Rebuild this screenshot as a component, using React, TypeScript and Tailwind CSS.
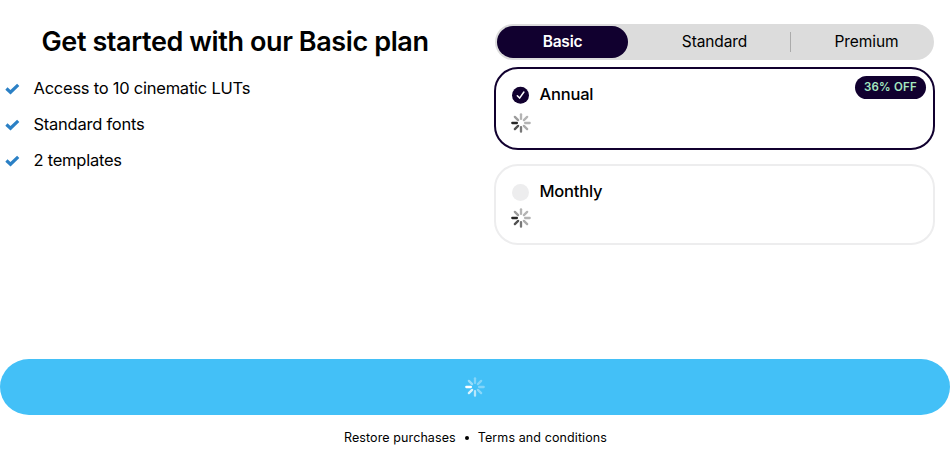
import React from "react";

const SPOKES = [0.34, 0.34, 0.34, 0.38, 0.62, 0.8, 1, 0.45];

function Spinner({ light = false }: { light?: boolean }) {
  const stroke = light ? "#ffffff" : "#262626";
  return (
    <svg width="20" height="20" viewBox="0 0 20 20" className="block shrink-0">
      {SPOKES.map((o, i) => (
        <line
          key={i}
          x1="10"
          y1="1.3"
          x2="10"
          y2="5.9"
          stroke={stroke}
          strokeWidth="2.3"
          strokeLinecap="round"
          opacity={o}
          transform={`rotate(${i * 45} 10 10)`}
        />
      ))}
    </svg>
  );
}

function Feature({ children }: { children: React.ReactNode }) {
  return (
    <li className="flex h-9 items-center">
      <svg width="16" height="14" viewBox="0 0 16 14" className="ml-[5px] mt-[1px] block">
        <path d="M1.4 6.5 L5.5 10.2 L13.2 2.9" fill="none" stroke="#2b80c5" strokeWidth="3.2" />
      </svg>
      <span className="ml-[12.5px] text-[16.5px] leading-none tracking-[-0.24px]">{children}</span>
    </li>
  );
}

export default function App() {
  return (
    <div className="flex h-[460px] w-[950px] flex-col overflow-hidden bg-white font-[Inter,sans-serif] text-black">
      <div className="flex h-[359px]">
        <section className="w-[494px]">
          <h1 className="ml-[41.5px] mt-[25px] whitespace-nowrap text-[27px] font-semibold leading-[34px] tracking-[-0.4px]">
            Get started with our Basic plan
          </h1>
          <ul className="mt-[11px]">
            <Feature>Access to 10 cinematic LUTs</Feature>
            <Feature>Standard fonts</Feature>
            <Feature>2 templates</Feature>
          </ul>
        </section>
        <section className="w-[441px] pt-[24px]">
          <div className="ml-px flex h-9 w-[439px] items-center rounded-full bg-[#dcdcdc] p-[2px] text-[15.5px] leading-none">
            <div className="flex h-8 w-[131px] items-center justify-center rounded-full bg-[#11002f] font-semibold text-white">
              <span className="tracking-[-0.2px]">Basic</span>
            </div>
            <div className="flex flex-1 items-center justify-center pl-[11px]">
              <span className="tracking-[-0.1px]">Standard</span>
            </div>
            <div className="h-5 w-px bg-[#ababab]" />
            <div className="flex w-[141px] items-center justify-center pl-[10px]">
              <span className="tracking-[-0.1px]">Premium</span>
            </div>
          </div>
          <div className="mt-[7px] flex h-[83px] justify-between rounded-[24px] border-2 border-[#11002f]">
            <div className="pl-[15px] pt-[15px]">
              <div className="flex h-[21px] items-center">
                <svg width="19" height="19" viewBox="0 0 19 19" className="ml-px mt-[2px] block">
                  <circle cx="8.5" cy="9.2" r="8.5" fill="#11002f" />
                  <path d="M5.3 9.7 L7.6 12.1 L11.9 6" fill="none" stroke="white" strokeWidth="1.5" strokeLinecap="round" strokeLinejoin="round" />
                </svg>
                <span className="ml-[8.5px] text-[16.5px] font-medium leading-none tracking-[-0.2px]">Annual</span>
              </div>
              <div className="mt-[8px]">
                <Spinner />
              </div>
            </div>
            <div className="mr-[7px] mt-[7px] flex h-[23px] w-[71px] items-center justify-center rounded-full bg-[#11002f] text-[11.5px] font-semibold leading-none text-[#a5e8c0]">
              <span className="tracking-[0.25px]">36% OFF</span>
            </div>
          </div>
          <div className="mt-[14px] h-[81px] rounded-[24px] border-2 border-[#ededee] pl-[15px] pt-[15px]">
            <div className="flex h-[21px] items-center">
              <div className="ml-[0.5px] mt-[2px] h-[17px] w-[17px] rounded-full bg-[#ededee]" />
              <span className="ml-[11px] text-[16.5px] font-medium leading-none tracking-[-0.2px]">Monthly</span>
            </div>
            <div className="mt-[6px]">
              <Spinner />
            </div>
          </div>
        </section>
      </div>
      <div className="flex h-[56px] items-center justify-center rounded-[29px/28px] bg-[#43c0f7]">
        <Spinner light />
      </div>
      <footer className="flex h-[45px] items-center justify-center pl-px pt-px text-[12.5px] leading-none">
        <span className="tracking-[0.1px]">Restore purchases</span>
        <span className="mx-[9px] h-1 w-1 rounded-full bg-black" />
        <span className="tracking-[0.1px]">Terms and conditions</span>
      </footer>
    </div>
  );
}
